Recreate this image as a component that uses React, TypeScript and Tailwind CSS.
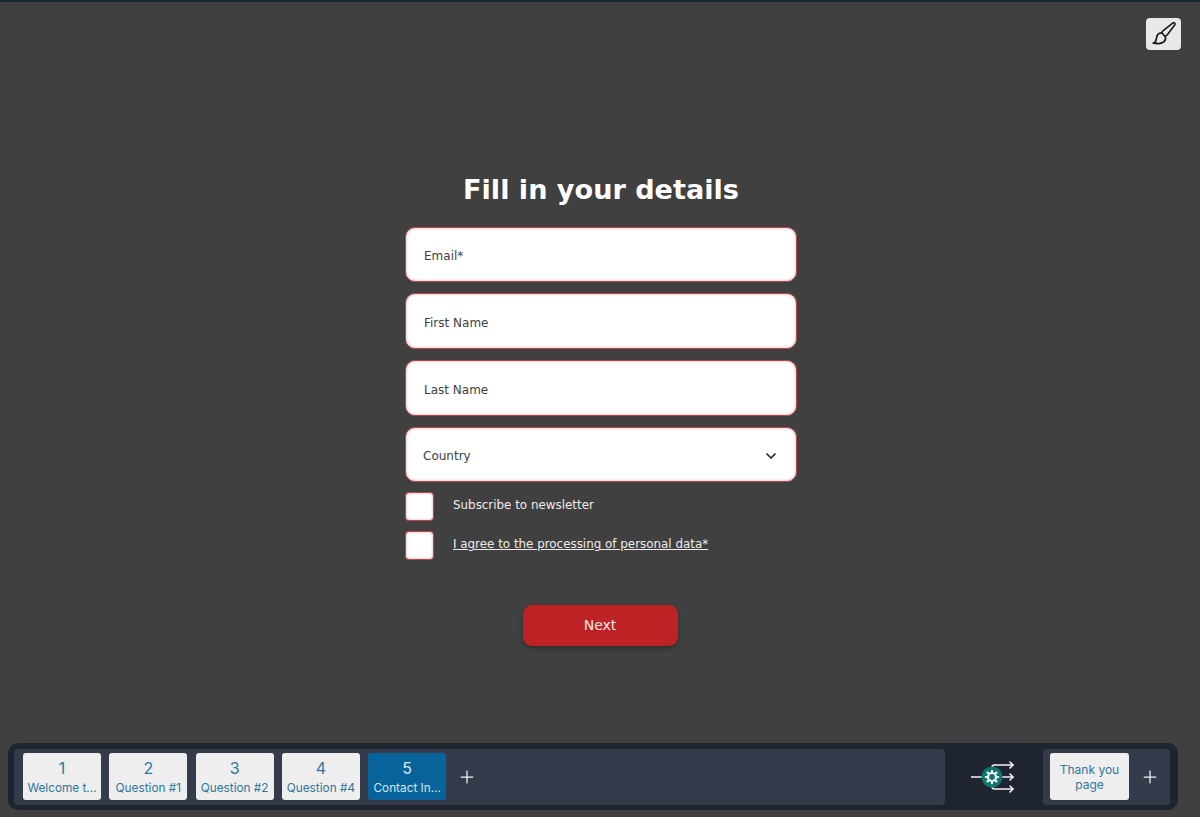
import { ChevronDown, Plus } from "lucide-react";

const steps = [
  { n: 1, label: "Welcome t..." },
  { n: 2, label: "Question #1" },
  { n: 3, label: "Question #2" },
  { n: 4, label: "Question #4" },
  { n: 5, label: "Contact In...", active: true },
];

const fields = ["Email*", "First Name", "Last Name"];

const Field = ({ label }: { label: string }) => (
  <div className="flex h-[55.7px] items-center rounded-[10px] border border-[#b8474b] bg-white pl-[18px] pt-[4px] text-[12px] text-[#404040] shadow-[inset_0_0_3px_rgba(190,60,60,0.45)]">
    {label}
  </div>
);

const Check = ({ children }: { children: React.ReactNode }) => (
  <div className="flex h-[29px] items-center gap-[19px] text-[11.900px] text-[#ececec]">
    <div className="h-[29px] w-[29px] rounded-[4px] border border-[#b8474b] bg-white shadow-[inset_0_0_3px_rgba(190,60,60,0.45)]" />
    <div>{children}</div>
  </div>
);

const BrushIcon = () => (
  <svg width="29" height="29" viewBox="0 0 26 26" fill="none" stroke="#1c1c1c" strokeWidth="1.5" strokeLinecap="round" strokeLinejoin="round">
    <path d="M21.5 2.6c1-.6 2.3.6 1.700 1.700l-6.600 8.600c-.6.8-1.500 1.400-2.300 1.700l-2.900-3c.3-.9.8-1.700 1.600-2.300z" />
    <path d="M11.2 11.6c-2.300.2-4 1.700-4.300 4-.2 1.500-.8 3-1.400 4.200l-1.400.9c2.700 1.100 7.100.6 9.300-1.200 1.400-1.200 1.800-2.900 1.100-4.600" />
    <path d="M3.800 20.800h3.400" />
  </svg>
);

const FlowIcon = () => (
  <svg width="44" height="36" viewBox="0 0 44 36" fill="none">
    <g stroke="#f2f2f2" strokeWidth="1.6" strokeLinecap="round" strokeLinejoin="round">
      <path d="M0 18h11" />
      <path d="M21 11V8.500c0-1.500 1-2.500 2.500-2.500H42" />
      <path d="M39 3l3 3-3 3" />
      <path d="M31 18h11" />
      <path d="M39 15l3 3-3 3" />
      <path d="M21 25v2.500c0 1.500 1 2.500 2.500 2.500H42" />
      <path d="M39 27l3 3-3 3" />
    </g>
    <circle cx="21" cy="18" r="10.500" fill="#0f766e" />
    <circle cx="21" cy="18" r="4" fill="none" stroke="#f4f4f4" strokeWidth="2.200" />
    <g stroke="#f4f4f4" strokeWidth="2.200" strokeLinecap="round">
      <path d="M21 11.800v1.600M21 22.600v1.600M14.800 18h1.600M25.600 18h1.600M16.600 13.600l1.200 1.200M24.200 21.200l1.200 1.200M16.600 22.400l1.200-1.200M24.200 14.800l1.200-1.200" />
    </g>
  </svg>
);

export default function App() {
  return (
    <div className="relative flex h-[817px] flex-col overflow-hidden bg-[#404040] font-['DejaVu_Sans',sans-serif]">
      <div className="h-[2px] bg-[#14282c]" />

      <button className="absolute right-[19px] top-[18px] flex h-[32px] w-[35px] items-center justify-center rounded-[4px] bg-[#e8e8e8]">
        <BrushIcon />
      </button>

      <main className="flex flex-1 justify-center pl-[2px] pt-[170px]">
        <div className="w-[392px]">
          <h1 className="mb-[18.500px] text-center text-[27.100px] font-bold leading-[36px] text-white">
            Fill in your details
          </h1>
          <div className="flex flex-col gap-[11px]">
            {fields.map((f) => (
              <Field key={f} label={f} />
            ))}
            <div className="flex h-[55.7px] items-center justify-between rounded-[10px] border border-[#b8474b] bg-white pl-[17px] pr-[17px] pt-[4px] text-[12px] text-[#404040] shadow-[inset_0_0_3px_rgba(190,60,60,0.45)]">
              Country
              <ChevronDown size={16} strokeWidth={2.5} className="text-[#222222]" />
            </div>
          </div>
          <div className="mt-[9.500px] flex flex-col gap-[10px]">
            <Check>Subscribe to newsletter</Check>
            <Check>
              <span className="underline">I agree to the processing of personal data*</span>
            </Check>
          </div>
          <div className="mt-[45px] flex justify-center pr-[2px]">
            <button className="h-[41px] w-[155px] rounded-[9px] bg-[#be2224] text-[14px] text-[#f7eaea] shadow-[0_2px_4px_rgba(0,0,0,0.3)]">
              Next
            </button>
          </div>
        </div>
      </main>

      <div className="mx-[8px] mb-[7px] flex h-[67px] w-[1170px] items-center rounded-[10px] bg-[#1e2430] pl-[6px] pr-[8px] font-['Inter',sans-serif]">
        <div className="flex h-[56px] w-[931px] items-center gap-[8.300px] rounded-[4px] bg-[#343c4b] pl-[9px]">
          {steps.map((s) => (
            <div
              key={s.n}
              className={`flex h-[47px] w-[78px] flex-col items-center justify-center rounded-[3px] ${
                s.active ? "bg-[#07639a] text-[#d8e6f0]" : "bg-[#eeeeee] text-[#2f779f]"
              }`}
            >
              <span className="text-[16px] leading-[20px]">{s.n}</span>
              <span className="mt-[2px] whitespace-nowrap text-[11.800px] leading-[16px]">{s.label}</span>
            </div>
          ))}
          <Plus size={20} strokeWidth={1.5} className="ml-[3px] text-[#f2f2f2]" />
        </div>
        <div className="flex flex-1 justify-center pr-[2px]">
          <FlowIcon />
        </div>
        <div className="flex h-[56px] w-[127px] items-center rounded-[4px] bg-[#343c4b] pl-[7px]">
          <div className="flex h-[47px] w-[79px] items-center justify-center rounded-[3px] bg-[#eeeeee] text-center text-[12px] leading-[15px] text-[#2f779f]">
            Thank you
            <br />
            page
          </div>
          <Plus size={20} strokeWidth={1.5} className="ml-[11px] text-[#f2f2f2]" />
        </div>
      </div>
    </div>
  );
}
